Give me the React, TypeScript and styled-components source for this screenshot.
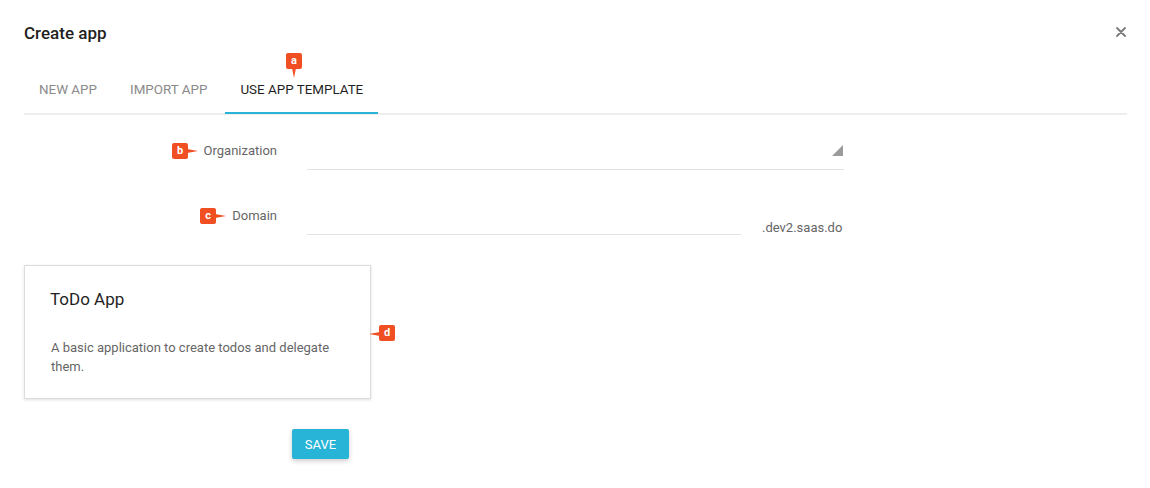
import React from 'react';
import styled, { createGlobalStyle } from 'styled-components';

const GlobalStyle = createGlobalStyle`
  html, body {
    margin: 0;
    padding: 0;
    background: #fff;
  }
  body {
    font-family: Roboto, 'Noto Sans', 'Liberation Sans', sans-serif;
    color: #212121;
  }
`;

const accent = '#27b4d7';
const marker = '#f04f23';

// Template cards shown below the form
const templates = [
  {
    id: 'todo',
    name: 'ToDo App',
    description: 'A basic application to create todos and delegate them.',
  },
];

const tabs = ['New app', 'Import app', 'Use app template'];

type Pointer = 'down' | 'right' | 'left';

const Badge: React.FC<{ letter: string; pointer: Pointer; x: number; y: number }> = ({
  letter,
  pointer,
  x,
  y,
}) => (
  <BadgeBox style={{ left: x, top: y }}>
    {letter}
    <BadgeTail $pointer={pointer} />
  </BadgeBox>
);

const App: React.FC = () => {
  const active = 2;

  return (
    <>
      <GlobalStyle />
      <Dialog>
        <Header>
          <Title>Create app</Title>
          <CloseButton aria-label='close'>
            <svg width='10' height='10' viewBox='0 0 10 10'>
              <path d='M1 1 L9 9 M9 1 L1 9' stroke='#7a7a7a' strokeWidth='1.8' strokeLinecap='round' />
            </svg>
          </CloseButton>
        </Header>

        <TabBar>
          {tabs.map((tab, i) => (
            <Tab key={tab} $active={i === active}>
              {tab}
            </Tab>
          ))}
        </TabBar>

        <Form>
          <FieldRow>
            <Label>Organization</Label>
            <Select>
              <svg width='11' height='11' viewBox='0 0 11 11'>
                <path d='M11 0 L11 11 L0 11 Z' fill='#9b9b9b' />
              </svg>
            </Select>
          </FieldRow>
          <FieldRow>
            <Label>Domain</Label>
            <DomainInput />
            <Suffix>.dev2.saas.do</Suffix>
          </FieldRow>
        </Form>

        <Cards>
          {templates.map((t) => (
            <Card key={t.id}>
              <CardTitle>{t.name}</CardTitle>
              <CardText>{t.description}</CardText>
            </Card>
          ))}
        </Cards>

        <Actions>
          <SaveButton>Save</SaveButton>
        </Actions>

        <Badge letter='a' pointer='down' x={286} y={53} />
        <Badge letter='b' pointer='right' x={172} y={143} />
        <Badge letter='c' pointer='right' x={200} y={208} />
        <Badge letter='d' pointer='left' x={379} y={325} />
      </Dialog>
    </>
  );
};

export default App;

const Dialog = styled.div`
  position: relative;
  width: 1150px;
  height: 488px;
  box-sizing: border-box;
  padding: 0 23px 0 24px;
  display: flex;
  flex-direction: column;
`;

const Header = styled.div`
  height: 66px;
  display: flex;
  align-items: flex-start;
  justify-content: space-between;
  padding-top: 20px;
  box-sizing: border-box;
`;

const Title = styled.h2`
  margin: 0;
  font-size: 17px;
  line-height: 26px;
  font-weight: 500;
  color: #1f1f1f;
`;

const CloseButton = styled.button`
  border: 0;
  background: none;
  padding: 0;
  margin-top: 6px;
  width: 12px;
  height: 12px;
  display: flex;
  align-items: center;
  justify-content: center;
`;

const TabBar = styled.div`
  display: flex;
  border-bottom: 2px solid #eeeeee;
  height: 49px;
  box-sizing: border-box;
`;

const Tab = styled.div<{ $active: boolean }>`
  padding: 0 15px;
  margin-right: 3px;
  height: 48px;
  box-sizing: border-box;
  display: flex;
  align-items: center;
  text-transform: uppercase;
  font-size: 13.4px;
  color: ${(p) => (p.$active ? '#1f1f1f' : '#8a8a8a')};
  border-bottom: 2px solid ${(p) => (p.$active ? accent : 'transparent')};
  margin-bottom: -1px;
`;

const Form = styled.div`
  display: flex;
  flex-direction: column;
  gap: 32px;
  margin-top: 22px;
`;

const FieldRow = styled.div`
  display: flex;
  align-items: flex-start;
`;

const Label = styled.label`
  width: 253px;
  margin-right: 30px;
  margin-top: 4px;
  text-align: right;
  font-size: 13px;
  line-height: 20px;
  color: #666;
`;

const Select = styled.div`
  width: 537px;
  height: 33px;
  box-sizing: border-box;
  border-bottom: 1px solid #e3e3e3;
  display: flex;
  justify-content: flex-end;
  padding: 8px 1px 0 0;
`;

const DomainInput = styled.div`
  width: 434px;
  height: 33px;
  box-sizing: border-box;
  border-bottom: 1px solid #e3e3e3;
`;

const Suffix = styled.span`
  margin-left: 21px;
  margin-top: 16px;
  font-size: 13px;
  line-height: 20px;
  color: #666;
`;

const Cards = styled.div`
  display: flex;
  gap: 16px;
  margin-top: 27px;
`;

const Card = styled.div`
  width: 347px;
  height: 134px;
  box-sizing: border-box;
  border: 1px solid #dcdcdc;
  box-shadow: 0 1px 3px rgba(0, 0, 0, 0.12);
  padding: 23px 25px;
`;

const CardTitle = styled.h3`
  margin: 0;
  font-size: 17px;
  line-height: 20px;
  font-weight: 400;
  color: #1f1f1f;
`;

const CardText = styled.p`
  margin: 29px 0 0 1px;
  font-size: 13px;
  line-height: 19px;
  color: #666;
`;

const Actions = styled.div`
  display: flex;
  margin-top: 30px;
  padding-left: 268px;
`;

const SaveButton = styled.button`
  width: 57px;
  height: 30px;
  border: 0;
  border-radius: 2px;
  background: ${accent};
  color: #fff;
  font-family: inherit;
  font-size: 13px;
  text-transform: uppercase;
  box-shadow: 0 2px 5px rgba(0, 0, 0, 0.2);
  padding: 0;
`;

const BadgeBox = styled.div`
  position: absolute;
  width: 16px;
  height: 16px;
  border-radius: 2px;
  background: ${marker};
  color: #fff;
  font-size: 11px;
  font-weight: 700;
  line-height: 16px;
  text-align: center;
`;

const BadgeTail = styled.span<{ $pointer: Pointer }>`
  position: absolute;
  width: 0;
  height: 0;
  ${(p) =>
    p.$pointer === 'down'
      ? `left: 6px; top: 15px; border-left: 2px solid transparent; border-right: 2px solid transparent; border-top: 10px solid ${marker};`
      : p.$pointer === 'right'
      ? `left: 15px; top: 6px; border-top: 2px solid transparent; border-bottom: 2px solid transparent; border-left: 11px solid ${marker};`
      : `right: 15px; top: 7px; border-top: 2px solid transparent; border-bottom: 2px solid transparent; border-right: 11px solid ${marker};`}
`;
